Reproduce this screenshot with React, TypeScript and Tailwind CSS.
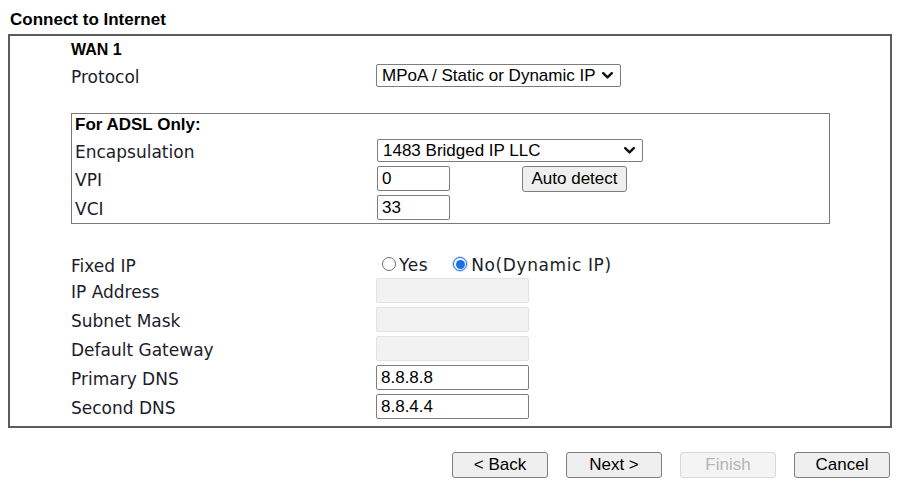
import type { ReactNode } from "react";

const labelFont = "font-['DejaVu_Sans',Verdana,sans-serif] text-[17px] leading-[20px] text-[#1c1c2a]";
const fieldFont = "font-['Liberation_Sans',Arial,sans-serif] text-[17px]";

function Label({ width, children }: { width: string; children: ReactNode }) {
  return <div className={`${width} shrink-0 pt-[3px] ${labelFont}`}>{children}</div>;
}

function Chevron() {
  return (
    <svg width="11" height="7" viewBox="0 0 11 7" className="shrink-0">
      <path d="M1.2 1.2 L5.5 5.4 L9.8 1.2" fill="none" stroke="#111" strokeWidth="2.4" strokeLinecap="round" strokeLinejoin="round" />
    </svg>
  );
}

function FakeSelect({ width, value }: { width: string; value: string }) {
  return (
    <div
      className={`${width} flex h-[23px] items-center justify-between rounded-[2px] border border-[#7d7d7d] bg-white pl-[5px] pr-[7px] text-black ${fieldFont}`}
    >
      <span className="leading-[20px]">{value}</span>
      <Chevron />
    </div>
  );
}

function TextBox({ width, value, disabled }: { width: string; value?: string; disabled?: boolean }) {
  return (
    <input
      readOnly
      disabled={disabled}
      defaultValue={value}
      className={`${width} h-[25px] rounded-[2px] border px-[4px] text-black outline-none ${fieldFont} ${
        disabled ? "border-[#e2e2e2] bg-[#f2f2f2]" : "border-[#7d7d7d] bg-white"
      }`}
    />
  );
}

function Button({ children, disabled, width = "w-[96px]" }: { children: ReactNode; disabled?: boolean; width?: string }) {
  return (
    <button
      type="button"
      disabled={disabled}
      className={`${width} h-[26px] rounded-[3px] border leading-[20px] ${fieldFont} ${
        disabled ? "border-[#d8d8d8] bg-[#f4f4f4] text-[#b5b5b5]" : "border-[#7d7d7d] bg-[#efefef] text-black"
      }`}
    >
      {children}
    </button>
  );
}

function Radio({ checked, label }: { checked?: boolean; label: string }) {
  return (
    <div className="flex items-center">
      {checked ? (
        <span className="flex h-[16px] w-[16px] shrink-0 items-center justify-center rounded-full bg-[#cfe0f6]">
          <span className="flex h-[14px] w-[14px] items-center justify-center rounded-full border-[1.5px] border-[#1a6fe8] bg-white">
            <span className="h-[9px] w-[9px] rounded-full bg-[#1a6fe8]" />
          </span>
        </span>
      ) : (
        <span className="h-[14px] w-[14px] shrink-0 rounded-full border border-[#6f6f6f] bg-white" />
      )}
      <span className={`ml-[3px] pt-[2px] tracking-[0.6px] ${labelFont}`}>{label}</span>
    </div>
  );
}

export default function App() {
  return (
    <div className="h-[490px] w-[899px] overflow-hidden bg-white">
      <div className="h-[34px] pl-[10px] pt-[10px] font-['Liberation_Sans',Arial,sans-serif] text-[17px] font-bold leading-[20px] text-black">
        Connect to Internet
      </div>

      <div className="ml-[8px] w-[884px] border-2 border-[#5c5c5c] pb-[7px] pl-[61px] pt-[4px]">
        <div className="font-['Liberation_Sans',Arial,sans-serif] text-[16px] font-bold leading-[20px] text-black">WAN 1</div>

        <div className="mt-[4px] flex h-[23px] items-center">
          <Label width="w-[305px]">Protocol</Label>
          <FakeSelect width="w-[245px]" value="MPoA / Static or Dynamic IP" />
        </div>

        <div className="mt-[26px] w-[759px] border border-[#7a7a7a] pb-[3px] pl-[3px] pt-[1px]">
          <div className="font-['Liberation_Sans',Arial,sans-serif] text-[17px] font-bold leading-[20px] text-black">
            For ADSL Only:
          </div>
          <div className="mt-[4px] flex h-[23px] items-center">
            <Label width="w-[302px]">Encapsulation</Label>
            <FakeSelect width="w-[266px]" value="1483 Bridged IP LLC" />
          </div>
          <div className="mt-[4px] flex h-[25px] items-center">
            <Label width="w-[302px]">VPI</Label>
            <TextBox width="w-[73px]" value="0" />
            <div className="ml-[72px]">
              <Button width="w-[105px]">Auto detect</Button>
            </div>
          </div>
          <div className="mt-[4px] flex h-[25px] items-center">
            <Label width="w-[302px]">VCI</Label>
            <TextBox width="w-[73px]" value="33" />
          </div>
        </div>

        <div className="mt-[29px] flex h-[22px] items-center">
          <Label width="w-[305px]">Fixed IP</Label>
          <div className="ml-[6px] flex items-center gap-[24px]">
            <Radio label="Yes" />
            <Radio checked label="No(Dynamic IP)" />
          </div>
        </div>

        {[
          { label: "IP Address", disabled: true },
          { label: "Subnet Mask", disabled: true },
          { label: "Default Gateway", disabled: true },
          { label: "Primary DNS", value: "8.8.8.8" },
          { label: "Second DNS", value: "8.8.4.4" },
        ].map((row, i) => (
          <div key={row.label} className={`${i === 0 ? "mt-[3px]" : "mt-[4px]"} flex h-[25px] items-center`}>
            <Label width="w-[305px]">{row.label}</Label>
            <TextBox width="w-[153px]" value={row.value} disabled={row.disabled} />
          </div>
        ))}
      </div>

      <div className="mt-[24px] flex justify-end gap-[18px] pr-[9px]">
        <Button>&lt; Back</Button>
        <Button>Next &gt;</Button>
        <Button disabled>Finish</Button>
        <Button>Cancel</Button>
      </div>
    </div>
  );
}
